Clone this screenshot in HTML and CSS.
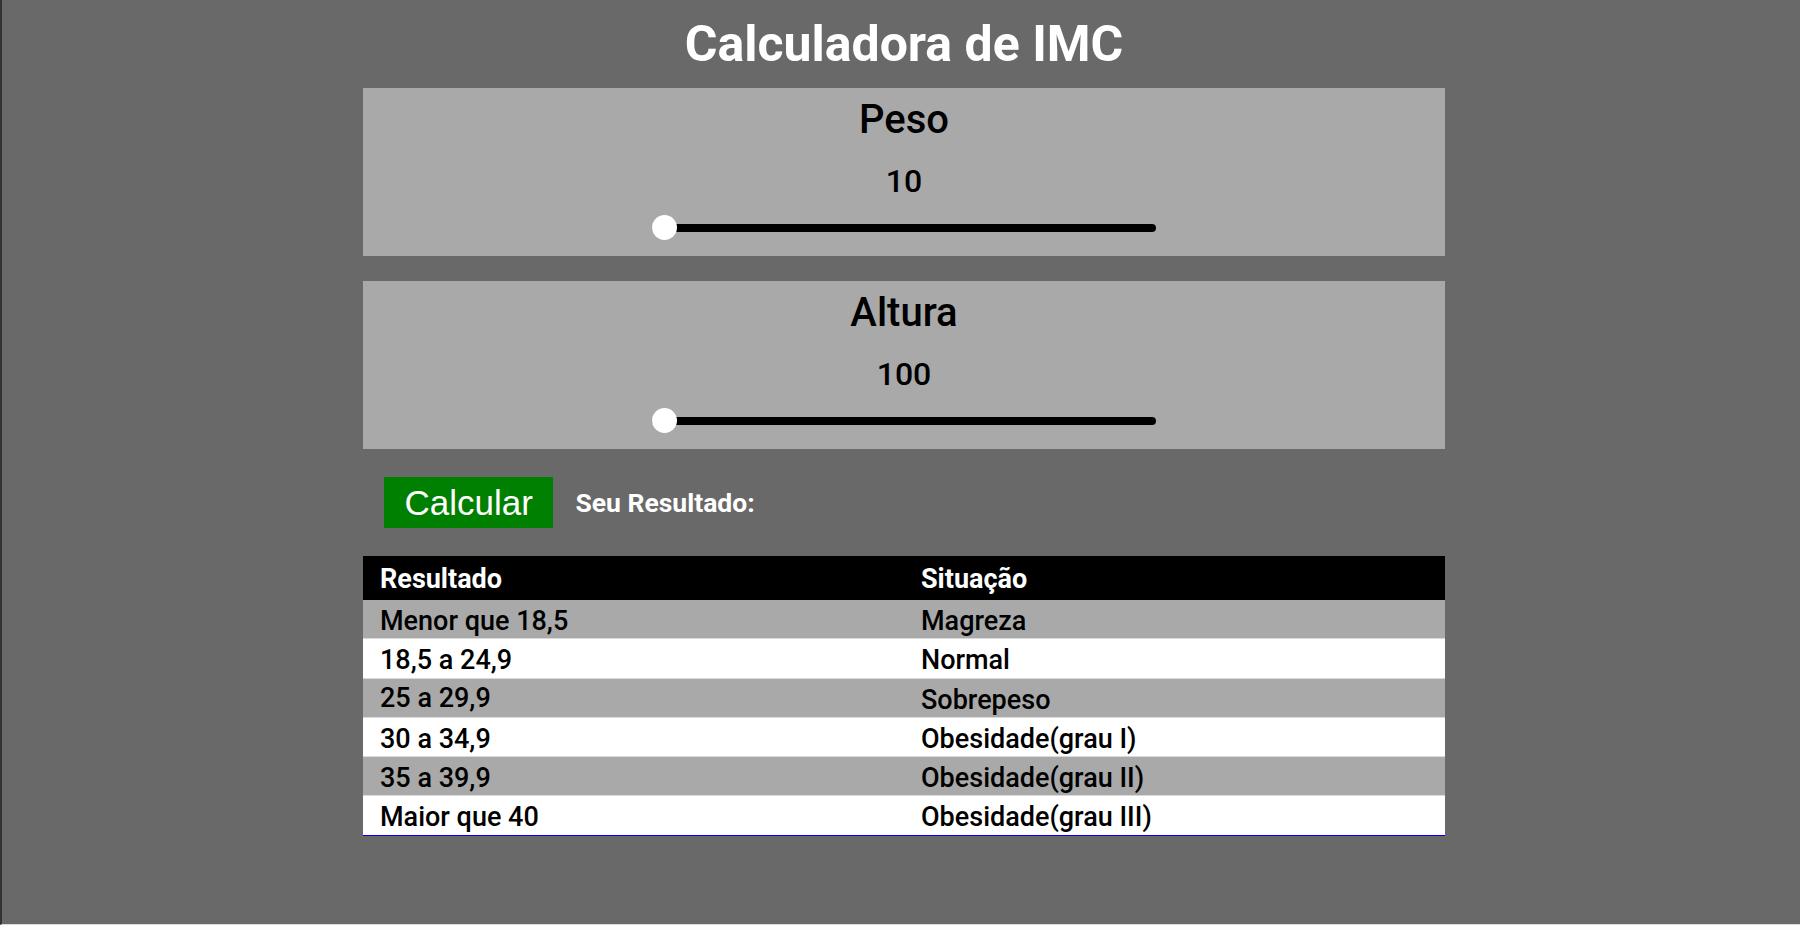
FILE: index.html
```html
<!DOCTYPE html>
<html lang="pt-BR">
<head>
<meta charset="utf-8">
<title>Calculadora de IMC</title>
<link rel="stylesheet" href="styles.css">
</head>
<body>
<main class="app">
  <h1 class="title">Calculadora de IMC</h1>

  <section class="panel">
    <div class="panel-label">Peso</div>
    <div class="panel-value">10</div>
    <input class="slider" type="range" min="10" max="200" value="10">
  </section>

  <section class="panel">
    <div class="panel-label">Altura</div>
    <div class="panel-value">100</div>
    <input class="slider" type="range" min="100" max="220" value="100">
  </section>

  <div class="actions">
    <button class="calc-btn" type="button">Calcular</button>
    <span class="result-label">Seu Resultado:</span>
  </div>

  <table class="imc-table">
    <thead>
      <tr><th>Resultado</th><th>Situação</th></tr>
    </thead>
    <tbody>
      <tr class="row-gray"><td>Menor que 18,5</td><td>Magreza</td></tr>
      <tr class="row-white"><td>18,5 a 24,9</td><td>Normal</td></tr>
      <tr class="row-gray row-high"><td>25 a 29,9</td><td>Sobrepeso</td></tr>
      <tr class="row-white"><td>30 a 34,9</td><td>Obesidade(grau I)</td></tr>
      <tr class="row-gray"><td>35 a 39,9</td><td>Obesidade(grau II)</td></tr>
      <tr class="row-white row-last"><td>Maior que 40</td><td>Obesidade(grau III)</td></tr>
    </tbody>
  </table>
</main>
</body>
</html>
```

FILE: styles.css
```css
* {
  box-sizing: border-box;
}

html, body {
  margin: 0;
  padding: 0;
}

body {
  min-height: 925px;
  height: 925px;
  background: #696969;
  border-left: 2px solid #333333;
  border-bottom: 1px solid #dcdcdc;
  padding-left: 6px;
  font-family: Roboto, "Liberation Sans", sans-serif;
  color: #000;
  overflow: hidden;
}

.app {
  width: 1082px;
  margin: 0 auto;
  display: flex;
  flex-direction: column;
}

.title {
  margin: 14px 0 14px;
  height: 60px;
  line-height: 60px;
  font-size: 50px;
  font-weight: 700;
  color: #ffffff;
  text-align: center;
}

.panel {
  background: #a9a9a9;
  display: flex;
  flex-direction: column;
  align-items: center;
  padding: 8px 0 16px;
}

.panel + .panel {
  margin-top: 25px;
}

.panel-label {
  font-size: 40px;
  line-height: 48px;
  font-weight: 500;
}

.panel-value {
  margin-top: 17px;
  font-size: 32px;
  line-height: 40px;
  font-weight: 500;
}

.slider {
  -webkit-appearance: none;
  appearance: none;
  margin: 14px 0 0;
  width: 504px;
  height: 25px;
  background: transparent;
  padding: 0;
}

.slider::-webkit-slider-runnable-track {
  height: 8px;
  background: #000;
  border-radius: 4px;
}

.slider::-webkit-slider-thumb {
  -webkit-appearance: none;
  appearance: none;
  width: 25px;
  height: 25px;
  border-radius: 50%;
  background: #ffffff;
  border: none;
  margin-top: -8.5px;
}

.actions {
  margin-top: 28px;
  padding-left: 21px;
  display: flex;
  align-items: center;
  gap: 22px;
  height: 51px;
}

.calc-btn {
  height: 51px;
  padding: 0 20.5px;
  border: none;
  background: #008000;
  color: #ffffff;
  font-family: "Liberation Sans", Arial, sans-serif;
  font-size: 35px;
  line-height: 51px;
}

.result-label {
  font-size: 26.5px;
  font-weight: 700;
  color: #ffffff;
}

.imc-table {
  margin-top: 28px;
  width: 100%;
  border-collapse: collapse;
  table-layout: fixed;
  font-size: 27px;
}

.imc-table th,
.imc-table td {
  text-align: left;
  padding: 0 17px;
  vertical-align: top;
}

.imc-table th {
  background: #000;
  color: #fff;
  font-weight: 700;
  height: 44px;
  padding-top: 3px;
  line-height: 41px;
}

.imc-table td {
  padding-top: 5px;
  line-height: 33.3px;
  font-weight: 500;
}

.row-gray td {
  background: #a9a9a9;
}

.row-white td {
  background: #ffffff;
}

.imc-table tbody tr + tr td {
  border-top: 1px solid #dadada;
}

.row-high td:first-child {
  padding-top: 3px;
  padding-bottom: 2px;
}

.row-last td {
  border-bottom: 1px solid #0000ff;
}
```
